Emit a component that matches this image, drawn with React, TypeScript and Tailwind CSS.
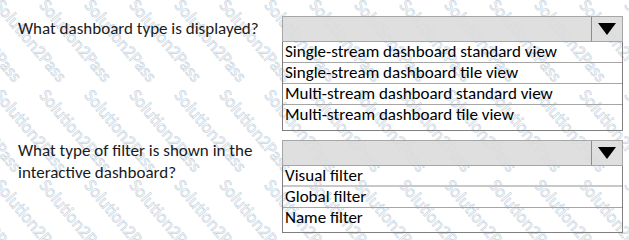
import React from "react";

const Arrow = () => (
  <svg width="18" height="12" viewBox="0 0 18 12">
    <polygon points="0,0 18,0 9,12" fill="#000" />
  </svg>
);

function Dropdown({
  options,
  lastTall,
  thickFirst,
}: {
  options: string[];
  lastTall: number;
  thickFirst?: boolean;
}) {
  return (
    <div className="w-[341px]">
      <div className="flex h-[26px] border border-[#a6a6a6] bg-[#dcdcdc]/90">
        <div className="flex-1" />
        <div className="flex w-[31px] items-center justify-center border-l border-[#8c8c8c]">
          <Arrow />
        </div>
      </div>
      <div className="border-x border-b border-[#7f7f7f]">
        {options.map((o, i) => {
          const last = i === options.length - 1;
          let cls = "pl-[2px] text-[17px] leading-[20px] text-black ";
          if (!last) {
            cls +=
              thickFirst && i === 0
                ? "h-[21px] border-b-2 border-[#c8c8c8]"
                : "h-[21px] border-b border-[#a6a6a6]";
          }
          return (
            <div key={o} className={cls} style={last ? { height: lastTall } : undefined}>
              {o}
            </div>
          );
        })}
      </div>
    </div>
  );
}

function Watermark() {
  const marks: { x: number; y: number }[] = [];
  for (let j = -2; j < 3; j++) {
    for (let k = -3; k < 15; k++) {
      marks.push({ x: 5 + 45 * k, y: -4 + 90 * j });
    }
  }
  return (
    <div className="pointer-events-none absolute inset-0 overflow-hidden" aria-hidden="true">
      {marks.map((m, i) => (
        <span
          key={i}
          className="absolute origin-top-left rotate-[50deg] whitespace-nowrap text-[18px] leading-[18px] text-transparent [-webkit-text-stroke:0.7px_#c9d5df]"
          style={{ left: m.x, top: m.y }}
        >
          Solution2Pass
        </span>
      ))}
    </div>
  );
}

export default function App() {
  return (
    <div
      className="relative h-[240px] w-[629px] overflow-hidden bg-white"
      style={{ fontFamily: "Carlito, 'Liberation Sans', Arial, sans-serif" }}
    >
      <Watermark />
      <div className="relative flex flex-col gap-[9px] pl-[18px] pt-[16px]">
        <div className="flex">
          <div className="w-[264px] pt-[2px] text-[17px] leading-[21px] text-[#1a1a1a]">
            What dashboard type is displayed?
          </div>
          <Dropdown
            lastTall={25}
            options={[
              "Single-stream dashboard standard view",
              "Single-stream dashboard tile view",
              "Multi-stream dashboard standard view",
              "Multi-stream dashboard tile view",
            ]}
          />
        </div>
        <div className="flex">
          <div className="w-[264px] pt-0 text-[17px] leading-[22px] text-[#1a1a1a]">
            What type of filter is shown in the
            <br />
            interactive dashboard?
          </div>
          <Dropdown
            lastTall={24}
            thickFirst
            options={["Visual filter", "Global filter", "Name filter"]}
          />
        </div>
      </div>
    </div>
  );
}
